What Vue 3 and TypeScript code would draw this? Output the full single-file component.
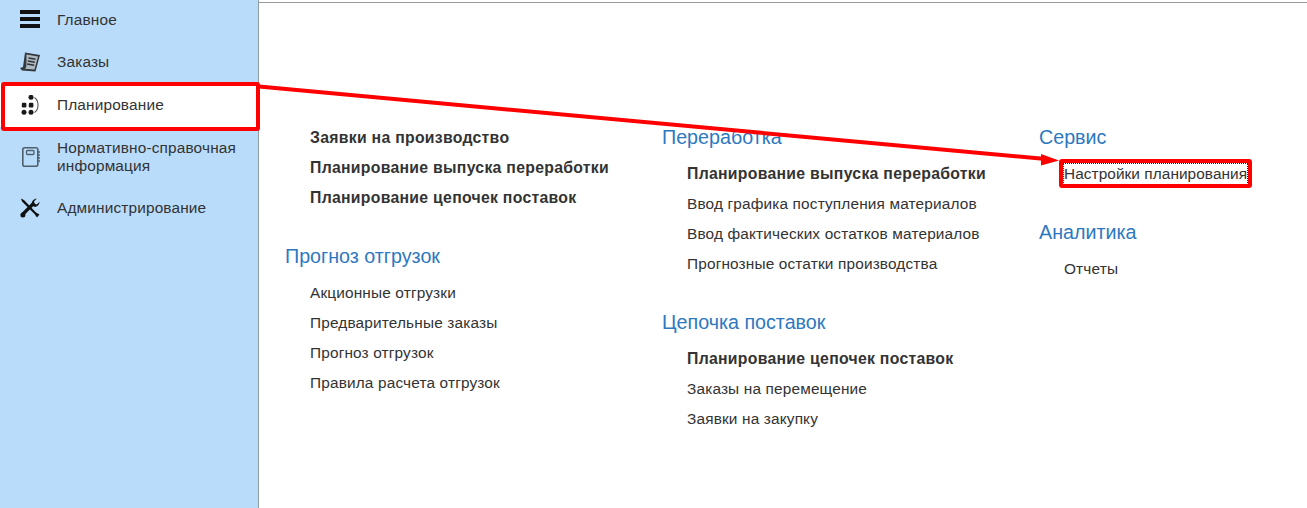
<script setup lang="ts">
interface Link { text: string; bold?: boolean; focus?: boolean }
interface Section { title?: string; links: Link[] }

const nav = [
  { id: 'main', label: 'Главное' },
  { id: 'orders', label: 'Заказы' },
  { id: 'plan', label: 'Планирование', active: true },
  { id: 'ref', label: 'Нормативно-справочная информация' },
  { id: 'admin', label: 'Администрирование' },
]

const columns: Section[][] = [
  [
    { links: [
      { text: 'Заявки на производство', bold: true },
      { text: 'Планирование выпуска переработки', bold: true },
      { text: 'Планирование цепочек поставок', bold: true },
    ] },
    { title: 'Прогноз отгрузок', links: [
      { text: 'Акционные отгрузки' },
      { text: 'Предварительные заказы' },
      { text: 'Прогноз отгрузок' },
      { text: 'Правила расчета отгрузок' },
    ] },
  ],
  [
    { title: 'Переработка', links: [
      { text: 'Планирование выпуска переработки', bold: true },
      { text: 'Ввод графика поступления материалов' },
      { text: 'Ввод фактических остатков материалов' },
      { text: 'Прогнозные остатки производства' },
    ] },
    { title: 'Цепочка поставок', links: [
      { text: 'Планирование цепочек поставок', bold: true },
      { text: 'Заказы на перемещение' },
      { text: 'Заявки на закупку' },
    ] },
  ],
  [
    { title: 'Сервис', links: [{ text: 'Настройки планирования', focus: true }] },
    { title: 'Аналитика', links: [{ text: 'Отчеты' }] },
  ],
]
</script>

<template>
  <div class="page">
    <aside class="side">
      <div v-for="n in nav" :key="n.id" class="nav" :class="[n.id, { active: n.active }]">
        <span class="ic">
          <svg v-if="n.id === 'main'" width="20" height="20" viewBox="0 0 20 20">
            <path d="M0 0h20v4H0zM0 7h20v4H0zM0 14h20v4H0z" fill="#111" />
          </svg>
          <svg v-else-if="n.id === 'orders'" width="20" height="20" viewBox="0 0 20 20">
            <path d="M5 0.500 20 3 15.500 19.500 2 18.500 0 16l3 -1z" fill="#33393d" />
            <path d="M6.500 2.500 18 4.500 14.500 17.500 5 16.800c.8-.8 1.200-1.800 1.400-3z" fill="#aeb9c1" />
            <path d="M8.500 6l7 1.200M7.800 9l7 1.200M7.200 12l7 1.200" stroke="#2e3336" stroke-width="1.400" />
          </svg>
          <svg v-else-if="n.id === 'plan'" width="20" height="20" viewBox="0 0 20 20">
            <g fill="#1a1a1a">
              <circle cx="11" cy="2.300" r="2.500" />
              <rect x="1.800" y="7.800" width="4.600" height="4.600" rx="1.200" />
              <rect x="8.800" y="7.800" width="4.600" height="4.600" rx="1.200" />
              <circle cx="4" cy="17.200" r="2.500" />
              <circle cx="11" cy="17.200" r="2.500" />
            </g>
            <path d="M14.500 2.500c4.700 3.300 4.700 11.700 0 15" fill="none" stroke="#555" stroke-width="1.100" />
          </svg>
          <svg v-else-if="n.id === 'ref'" width="20" height="20" viewBox="0 0 20 20" fill="none" stroke="#4f5f6b">
            <rect x="2.800" y="0.800" width="15" height="18.500" rx="1.800" stroke-width="1.600" />
            <rect x="6.500" y="3.500" width="7.500" height="4" rx="1" stroke-width="1.300" />
            <path d="M17.500 5h2.500M17.500 8h2.500M17.500 11h2.500M17.500 14h2.500" stroke-width="1.400" />
          </svg>
          <svg v-else width="20" height="20" viewBox="0 0 20 20">
            <path d="M1 0.500 4 2 16 14.500 19.500 16.500 17 19.500 14.500 16 2 3.500z" fill="#111" />
            <path d="M13 6 3.500 15.500" stroke="#111" stroke-width="3.200" stroke-linecap="round" />
            <circle cx="2.900" cy="17" r="2.500" fill="#111" />
            <path d="M11.800 6.200c-.3-2.700 1.700-5.300 5-5.700l-2.800 2.900.6 2.300 2.300.7 2.700-2.700c-.2 3.400-2.900 5.600-5.700 5.100z" fill="#111" />
          </svg>
        </span>
        <span class="label">{{ n.label }}</span>
      </div>
    </aside>

    <main class="content">
      <div v-for="(col, i) in columns" :key="i" class="col" :class="`col${i}`">
        <section v-for="(s, j) in col" :key="j" class="sec">
          <h2 v-if="s.title">{{ s.title }}</h2>
          <a v-for="l in s.links" :key="l.text" class="link" :class="{ bold: l.bold, focus: l.focus }">{{ l.text }}</a>
        </section>
      </div>
    </main>

    <svg class="marks" width="1307" height="508" viewBox="0 0 1307 508">
      <rect x="3" y="84" width="255" height="45" rx="1" fill="none" stroke="#f00" stroke-width="4" />
      <rect x="1061" y="161" width="189" height="25" rx="1" fill="none" stroke="#f00" stroke-width="4" />
      <path d="M259 86.500 1043 158.800" stroke="#f00" stroke-width="4" />
      <path d="M1041 154 1059 160.500 1041 165.500z" fill="#f00" />
    </svg>
  </div>
</template>

<style>
html, body { margin: 0; background: #fff; overflow: hidden; }
</style>

<style scoped>
.page {
  position: relative;
  display: flex;
  width: 1307px;
  height: 508px;
  font-family: "Liberation Sans", Arial, sans-serif;
  font-size: 15.400px;
  letter-spacing: 0.150px;
  color: #333;
  overflow: hidden;
}
.side {
  box-sizing: border-box;
  flex: 0 0 259px;
  background: #b9dcfa;
  border-right: 1px solid #8f9aa3;
}
.nav {
  display: flex;
  align-items: center;
  height: 43px;
  padding-left: 20px;
  color: #333;
}
.nav.main { height: 40px; }
.nav.active { height: 44px; background: #fff; }
.nav.ref { height: 59px; }
.ic {
  flex: 0 0 37px;
  display: flex;
  align-items: center;
}
.label { line-height: 18px; width: 195px; }
.content {
  flex: 1;
  border-top: 1px solid #999;
  margin-top: 2px;
  display: flex;
  padding-top: 119px;
  padding-left: 26px;
}
.col { display: flex; flex-direction: column; }
.col0 { width: 377px; padding-top: 1px; }
.col1 { width: 377px; }
.sec { display: flex; flex-direction: column; align-items: flex-start; }
.sec + .sec { margin-top: 28px; }
h2 {
  margin: 0 0 7px;
  font-size: 19.700px;
  letter-spacing: 0;
  line-height: 30px;
  font-weight: 400;
  color: #2d78c0;
}
.link {
  display: block;
  margin-left: 25px;
  height: 30px;
  line-height: 30px;
  white-space: nowrap;
}
.link.bold {
  font-weight: 700;
  font-size: 15.800px;
  letter-spacing: 0.280px;
}
.link.focus {
  height: 20px;
  line-height: 20px;
  margin-top: 5px;
  margin-bottom: 5px;
  letter-spacing: 0.060px;
  outline: 1px dotted #222;
}
.marks { position: absolute; left: 0; top: 0; pointer-events: none; }
</style>
